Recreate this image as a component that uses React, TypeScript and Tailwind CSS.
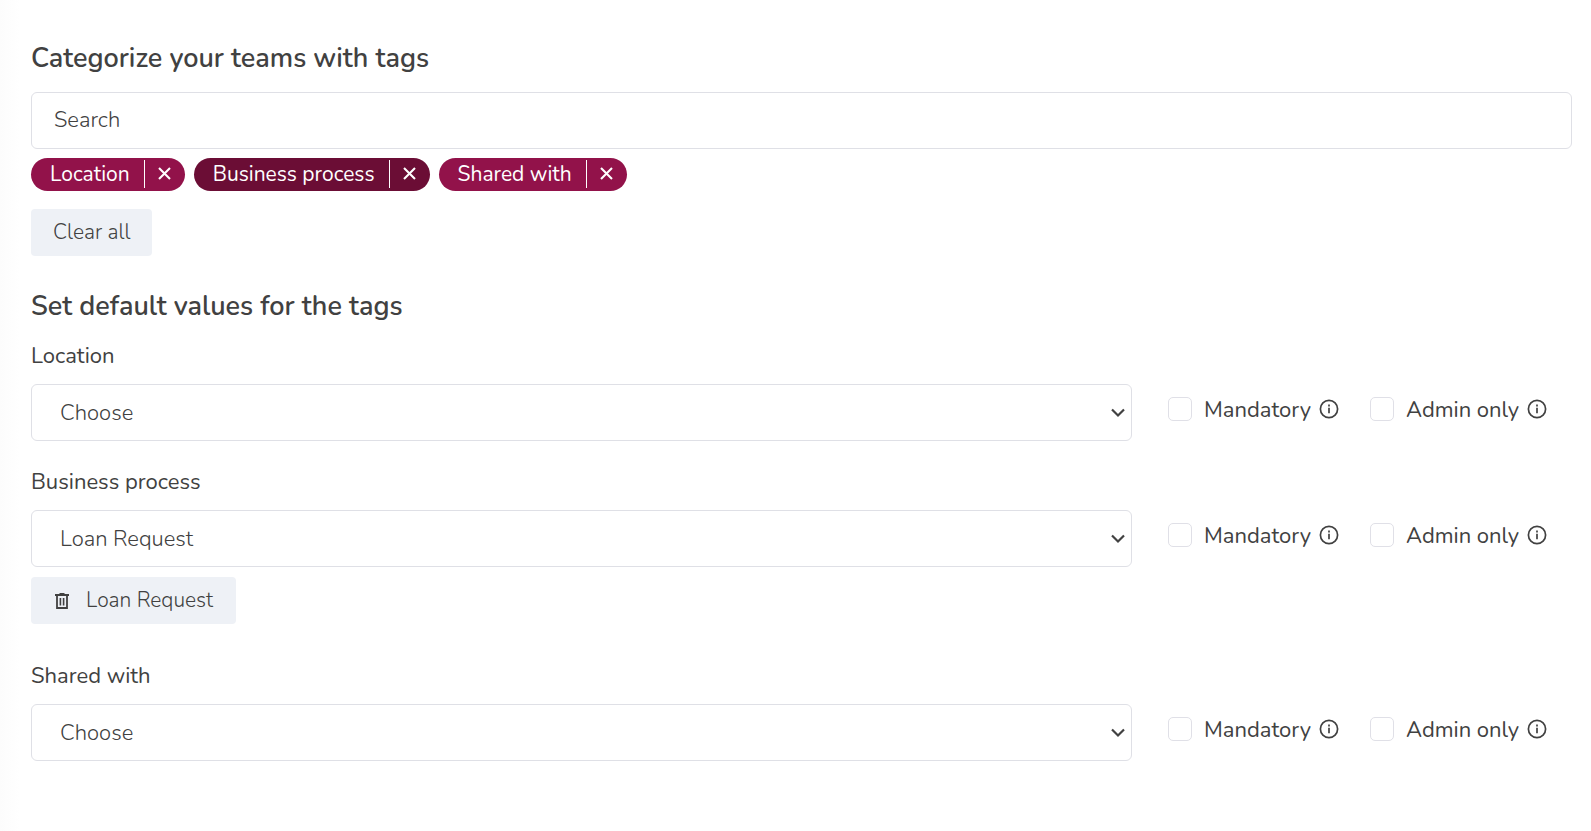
import { useState } from "react";

interface Tag {
  id: string;
  name: string;
  active?: boolean;
  value?: string;
}

const initialTags: Tag[] = [
  { id: "location", name: "Location" },
  { id: "process", name: "Business process", active: true, value: "Loan Request" },
  { id: "shared", name: "Shared with" },
];

function InfoIcon() {
  return (
    <svg width="20" height="20" viewBox="0 0 20 20" fill="none" stroke="currentColor" strokeWidth="1.7" aria-hidden="true">
      <circle cx="10" cy="10" r="8.6" />
      <path d="M10 8.8v5.4M10 5.6v1.8" />
    </svg>
  );
}

function TrashIcon() {
  return (
    <svg width="16" height="16" viewBox="0 0 16 16" fill="none" stroke="currentColor" aria-hidden="true">
      <path d="M1 2h14" strokeWidth="2" />
      <path d="M5.5 0.6h5" strokeWidth="1.2" />
      <path d="M3 2.5v12.5h10V2.5" strokeWidth="1.8" />
      <path d="M6.4 5v7.5M9.6 5v7.5" strokeWidth="1.6" />
    </svg>
  );
}

function CloseIcon() {
  return (
    <svg width="13" height="13" viewBox="0 0 13 13" fill="none" stroke="currentColor" strokeWidth="2.1" aria-hidden="true">
      <path d="M1 1l11 11M12 1L1 12" />
    </svg>
  );
}

function TagPill({ tag, onRemove }: { tag: Tag; onRemove: () => void }) {
  return (
    <div
      className={`flex h-[33px] items-center rounded-full pb-0.5 pl-[19px] text-[21px] text-white ${
        tag.active ? "bg-[#6b0d35]" : "bg-[#92124a]"
      }`}
    >
      <span className="pt-0.5 pr-3.5">{tag.name}</span>
      <button
        type="button"
        aria-label={`Remove ${tag.name}`}
        onClick={onRemove}
        className="flex h-7 w-[41px] items-center border-l border-white pl-[13px]"
      >
        <CloseIcon />
      </button>
    </div>
  );
}

function Option({ id, label, className }: { id: string; label: string; className: string }) {
  return (
    <div className={`flex items-center ${className}`}>
      <input
        id={id}
        type="checkbox"
        className="size-6 shrink-0 appearance-none rounded-[5px] border border-[#e0e0e7] bg-white checked:bg-[#92124a]"
      />
      <label htmlFor={id} className="ml-3 flex-1 pt-0.5 leading-7 whitespace-nowrap">
        {label}
      </label>
      <InfoIcon />
    </div>
  );
}

function TagDefault({ tag }: { tag: Tag }) {
  const [value, setValue] = useState(tag.value ?? "");

  return (
    <div>
      <label htmlFor={tag.id} className="block leading-7">
        {tag.name}
      </label>
      <div className="mt-3.5 flex gap-9">
        <div className="relative min-w-0 flex-1">
          <select
            id={tag.id}
            value={value}
            onChange={(e) => setValue(e.target.value)}
            className="h-[57px] w-full appearance-none rounded-md border border-[#dfe0e6] bg-white px-7 pt-0.5 font-light"
          >
            <option value="">Choose</option>
            <option value="Loan Request">Loan Request</option>
          </select>
          <svg
            className="pointer-events-none absolute top-6 right-1.5"
            width="16"
            height="10"
            viewBox="0 0 16 10"
            fill="none"
            stroke="currentColor"
            strokeWidth="2.2"
            aria-hidden="true"
          >
            <path d="M2 1.5l6 6 6-6" />
          </svg>
        </div>
        <div className="flex h-[49px] w-[404px] shrink-0 items-center gap-[31px]">
          <Option id={`${tag.id}-mandatory`} label="Mandatory" className="w-[171px]" />
          <Option id={`${tag.id}-admin`} label="Admin only" className="w-[177px]" />
        </div>
      </div>
      {value && (
        <button
          type="button"
          onClick={() => setValue("")}
          className="mt-2.5 flex h-[47px] items-center gap-4 rounded bg-[#eef1f6] px-[23px] text-[21px] font-light"
        >
          <TrashIcon />
          {value}
        </button>
      )}
    </div>
  );
}

export default function App() {
  const [tags, setTags] = useState(initialTags);
  const [search, setSearch] = useState("");

  return (
    <main className="min-h-screen bg-white bg-linear-to-r from-[#fcfcfc] to-white to-[20px] pt-[41px] pr-[19px] pb-[70px] pl-[31px] font-['Nunito','Open_Sans',sans-serif] text-[22px] text-[#414141]">
      <h1 className="text-[27px] leading-9 font-semibold">Categorize your teams with tags</h1>
      <input
        type="text"
        aria-label="Search"
        placeholder="Search"
        value={search}
        onChange={(e) => setSearch(e.target.value)}
        className="mt-[15px] block h-[57px] w-full rounded-md border border-[#dfe0e6] bg-white px-[22px] pb-0.5 font-light placeholder:text-[#414141]"
      />
      <div className="mt-[9px] flex flex-wrap gap-[9px]">
        {tags.map((tag) => (
          <TagPill key={tag.id} tag={tag} onRemove={() => setTags(tags.filter((t) => t.id !== tag.id))} />
        ))}
      </div>
      <button
        type="button"
        onClick={() => setTags([])}
        className="mt-[18px] block h-[47px] rounded bg-[#eef1f6] px-[22px] text-[21px] font-light"
      >
        Clear all
      </button>

      <h2 className="mt-[33px] text-[27px] leading-9 font-semibold">Set default values for the tags</h2>
      <div className="mt-[17px] flex flex-col">
        {tags.map((tag) => (
          <div key={tag.id} className={tag.active ? "mb-[38px]" : "mb-[27px]"}>
            <TagDefault tag={tag} />
          </div>
        ))}
      </div>
    </main>
  );
}
